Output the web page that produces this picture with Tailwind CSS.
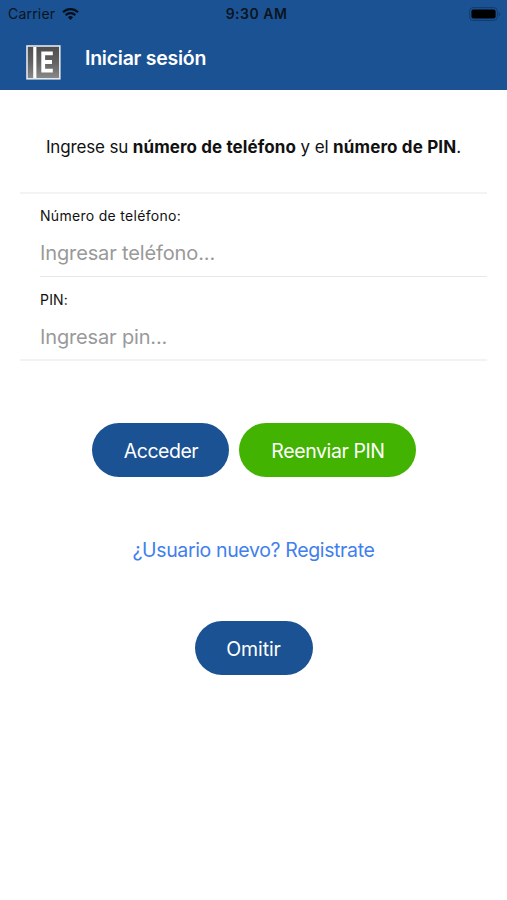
<!DOCTYPE html>
<html lang="es">
<head>
<meta charset="utf-8">
<title>Iniciar sesión</title>
<script src="https://cdn.jsdelivr.net/npm/@tailwindcss/browser@4"></script>
</head>
<body class="h-[900px] w-[507px] overflow-hidden bg-white font-['Inter','Liberation_Sans',sans-serif] text-[#111]">
<header class="h-[90px] bg-[#1b5293]">
  <div class="grid h-7 grid-cols-3 items-center pl-2 pr-[6px] text-[14px] leading-7 text-[#0a1420]">
    <div class="flex items-center gap-[7px]">
      <span class="tracking-[0.2px]">Carrier</span>
      <svg class="h-3 w-[17px]" viewBox="0 0 17 12" fill="none" stroke="#06101c" stroke-width="2.2">
        <path d="M1 4.2a10.8 10.8 0 0 1 15 0M3.7 7.1a6.9 6.9 0 0 1 9.6 0"/>
        <path d="M8.5 12 5.9 9.3a3.8 3.8 0 0 1 5.2 0z" fill="#06101c" stroke="none"/>
      </svg>
    </div>
    <div class="pl-1 text-center text-[14px] font-semibold tracking-[0.5px]">9:30 AM</div>
    <svg class="h-[14px] w-[32px] justify-self-end" viewBox="0 0 32 14">
      <rect x=".6" y=".6" width="27.8" height="12.8" rx="3.6" fill="none" stroke="#123b6b"/>
      <rect x="2.4" y="2.4" width="24.2" height="9.2" rx="2" fill="#000"/>
      <path d="M29.8 4.8c1.8.8 1.8 3.6 0 4.4z" fill="#123b6b"/>
    </svg>
  </div>
  <div class="flex h-[62px] items-start pl-[26px]">
    <svg class="mt-[17px] h-[35px] w-[35px]" viewBox="0 0 35 35">
      <defs><linearGradient id="g" x1="0" y1="0" x2="0" y2="1"><stop offset="0" stop-color="#4d4d4d"/><stop offset=".5" stop-color="#626262"/><stop offset="1" stop-color="#8a8a8a"/></linearGradient></defs>
      <rect x="1" y="1" width="32.8" height="32.8" fill="url(#g)" stroke="#e6e8ea" stroke-width="1.6"/>
      <path d="M8.8 2v31" stroke="#fff" stroke-width="3.2"/>
      <path d="M26.8 8.4H17.2v17.2h9.6M17.2 17h8.8" fill="none" stroke="#fff" stroke-width="3.8"/>
    </svg>
    <h1 class="ml-6 mt-[15px] text-[19.5px] font-semibold leading-[30px] tracking-[-0.25px] text-white">Iniciar sesión</h1>
  </div>
</header>
<main class="flex flex-col items-center">
  <p class="mt-[45px] whitespace-nowrap text-[17px] leading-6 tracking-[-0.15px]">Ingrese su <b class="font-bold tracking-[0.1px]">número de teléfono</b> y el <b class="font-bold tracking-[0.15px]">número de PIN</b>.</p>
  <form class="mt-[33px] h-[169px] w-[467px] border-y-2 border-[#f3f3f3] pl-5">
    <label class="block h-[83px] border-b border-[#e8e8e8] pt-3">
      <span class="block text-[14px] leading-5 tracking-[0.3px]">Número de teléfono:</span>
      <span class="mt-[11px] block text-[20px] leading-8 tracking-[-0.13px] text-[#999]">Ingresar teléfono...</span>
    </label>
    <label class="block pt-[13px]">
      <span class="block text-[14px] leading-5 tracking-[0.2px]">PIN:</span>
      <span class="mt-[11px] block text-[20px] leading-8 tracking-[-0.15px] text-[#999]">Ingresar pin...</span>
    </label>
  </form>
  <div class="mt-[62px] flex gap-[10px]">
    <button class="h-[54px] w-[137px] rounded-full bg-[#1b5293] pl-[2px] pr-0 pt-[3px] text-[19.5px] tracking-[-0.5px] text-white">Acceder</button>
    <button class="h-[54px] w-[177px] rounded-full bg-[#41b300] pl-[2px] pr-0 pt-[3px] text-[19.5px] tracking-[-0.4px] text-white">Reenviar PIN</button>
  </div>
  <a class="mt-[59px] block text-[19.5px] leading-7 tracking-[-0.36px] text-[#3f80ee]">¿Usuario nuevo? Registrate</a>
  <button class="mt-[57px] h-[54px] w-[118px] rounded-full bg-[#1b5293] pt-[4px] text-[19.5px] tracking-[-0.1px] text-white">Omitir</button>
</main>
</body>
</html>
